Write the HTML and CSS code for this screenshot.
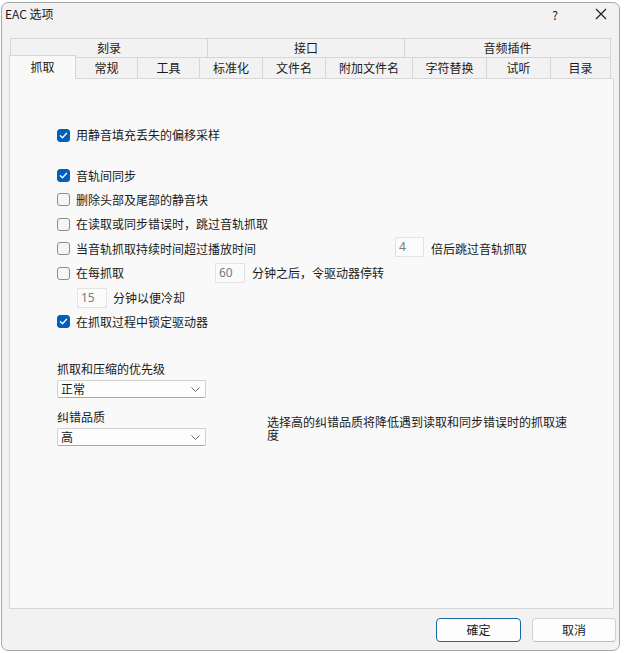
FILE: index.html
```html
<!DOCTYPE html>
<html lang="zh-CN">
<head>
<meta charset="utf-8">
<title>EAC 选项</title>
<link rel="stylesheet" href="styles.css">
</head>
<body>
<div class="window">
  <div class="titlebar">
    <span class="title">EAC 选项</span>
    <span class="help">?</span>
    <span class="close"><svg width="12" height="12" viewBox="0 0 12 12"><path d="M1 1 L11 11 M11 1 L1 11" stroke="#1a1a1a" stroke-width="1.1" fill="none"/></svg></span>
  </div>

  <div class="tabs">
    <div class="tabrow top">
      <div class="tab w197">刻录</div>
      <div class="tab w197">接口</div>
      <div class="tab w207 last">音频插件</div>
    </div>
    <div class="tabrow bottom">
      <div class="tab sel w67">抓取</div>
      <div class="tab w61">常规</div>
      <div class="tab w62">工具</div>
      <div class="tab w63">标准化</div>
      <div class="tab w63">文件名</div>
      <div class="tab w87">附加文件名</div>
      <div class="tab w74">字符替换</div>
      <div class="tab w64">试听</div>
      <div class="tab w61 last">目录</div>
    </div>
    <div class="panel">
      <div class="row first">
        <span class="cb on"><svg width="13" height="13" viewBox="0 0 13 13"><path d="M3.4 6.7 L5.5 8.8 L9.6 4.3" stroke="#fff" stroke-width="1.3" fill="none" stroke-linecap="round" stroke-linejoin="round"/></svg></span>
        <span class="lbl">用静音填充丢失的偏移采样</span>
      </div>
      <div class="group">
        <div class="row">
          <span class="cb on"><svg width="13" height="13" viewBox="0 0 13 13"><path d="M3.4 6.7 L5.5 8.8 L9.6 4.3" stroke="#fff" stroke-width="1.3" fill="none" stroke-linecap="round" stroke-linejoin="round"/></svg></span>
          <span class="lbl">音轨间同步</span>
        </div>
        <div class="row">
          <span class="cb"></span>
          <span class="lbl">删除头部及尾部的静音块</span>
        </div>
        <div class="row">
          <span class="cb"></span>
          <span class="lbl">在读取或同步错误时，跳过音轨抓取</span>
        </div>
        <div class="row">
          <span class="lead lead-long"><span class="cb"></span><span class="lbl">当音轨抓取持续时间超过播放时间</span></span>
          <span class="num n4">4</span>
          <span class="after">倍后跳过音轨抓取</span>
        </div>
        <div class="row">
          <span class="lead lead-short"><span class="cb"></span><span class="lbl">在每抓取</span></span>
          <span class="num n30">60</span>
          <span class="after">分钟之后，令驱动器停转</span>
        </div>
        <div class="row indent">
          <span class="num n30">15</span>
          <span class="after">分钟以便冷却</span>
        </div>
        <div class="row">
          <span class="cb on"><svg width="13" height="13" viewBox="0 0 13 13"><path d="M3.4 6.7 L5.5 8.8 L9.6 4.3" stroke="#fff" stroke-width="1.3" fill="none" stroke-linecap="round" stroke-linejoin="round"/></svg></span>
          <span class="lbl">在抓取过程中锁定驱动器</span>
        </div>
      </div>

      <div class="field prio">
        <div class="flabel">抓取和压缩的优先级</div>
        <div class="select"><span>正常</span><svg width="9" height="5" viewBox="0 0 9 5"><path d="M0.5 0.5 L4.5 4.5 L8.5 0.5" stroke="#666" stroke-width="1" fill="none"/></svg></div>
      </div>
      <div class="qual">
        <div class="field">
          <div class="flabel">纠错品质</div>
          <div class="select"><span>高</span><svg width="9" height="5" viewBox="0 0 9 5"><path d="M0.5 0.5 L4.5 4.5 L8.5 0.5" stroke="#666" stroke-width="1" fill="none"/></svg></div>
        </div>
        <div class="desc">选择高的纠错品质将降低遇到读取和同步错误时的抓取速度</div>
      </div>
    </div>
  </div>

  <div class="buttons">
    <div class="btn default">確定</div>
    <div class="btn">取消</div>
  </div>
</div>
</body>
</html>
```
FILE: styles.css
```css
* { box-sizing: border-box; }
html, body { margin: 0; padding: 0; }
body {
  width: 624px;
  height: 653px;
  background: #ffffff;
  font-family: "Noto Sans CJK SC", "Noto Sans", sans-serif;
  font-size: 12px;
  color: #1a1a1a;
  overflow: hidden;
}
.window {
  margin: 2px 0 0 1px;
  width: 619px;
  height: 649px;
  background: #f2f2f2;
  border: 1px solid #a7a7a7;
  border-radius: 7px;
  overflow: hidden;
}
.titlebar {
  height: 22px;
  display: flex;
  align-items: center;
  padding-left: 3px;
}
.title { flex: 1; line-height: 16px; }
.help { width: 20px; text-align: center; margin-right: 26px; font-size: 12px; }
.close { width: 20px; display: flex; justify-content: center; margin-right: 8px; }

.tabs { margin: 13px 0 0 7px; }
.tabrow { display: flex; }
.tabrow.top { margin-left: 1px; height: 19px; }
.tabrow.bottom { height: 21px; }
.tab {
  display: flex;
  align-items: center;
  justify-content: center;
  border-top: 1px solid #d6d6d6;
  border-left: 1px solid #d6d6d6;
  background: #f2f2f2;
  line-height: 14px;
}
.tab.last { border-right: 1px solid #d6d6d6; }
.tab.sel {
  position: relative;
  z-index: 1;
  height: 24px;
  margin-top: -2px;
  margin-bottom: -1px;
  background: #f9f9f9;
  border-right: 1px solid #d6d6d6;
  padding-bottom: 2px;
}
.tab.sel + .tab { border-left: none; }
.w197 { width: 197px; }
.w207 { width: 207px; }
.w67 { width: 67px; }
.w61 { width: 61px; }
.w62 { width: 62px; }
.w63 { width: 63px; }
.w87 { width: 87px; }
.w74 { width: 74px; }
.w64 { width: 64px; }

.panel {
  width: 605px;
  height: 531px;
  background: #f9f9f9;
  border: 1px solid #d6d6d6;
  padding: 44px 0 0 47px;
}
.row {
  display: flex;
  align-items: center;
  height: 24.4px;
}
.group { margin-top: 16px; }
.cb {
  width: 13px;
  height: 13px;
  border-radius: 3px;
  border: 1px solid #8b8b8b;
  background: #f6f6f6;
  flex: none;
  display: flex;
}
.cb.on { background: #005fb8; border-color: #005fb8; }
.cb svg { margin: -1px; }
.lbl { margin-left: 6px; line-height: 14px; }
.lead { display: flex; align-items: center; flex: none; }
.lead-long { width: 338px; }
.lead-short { width: 158px; }
.num {
  height: 20px;
  border: 1px solid #e3e3e3;
  background: #fbfbfb;
  color: #7a7a7a;
  padding-left: 3px;
  line-height: 18px;
  font-family: "Noto Sans", "Noto Sans CJK SC", sans-serif;
  font-size: 12px;
  flex: none;
}
.n4 { width: 29px; margin-top: -3px; }
.n30 { width: 30px; }
.after { margin-left: 7px; line-height: 14px; }
.indent { padding-left: 20px; }
.indent .after { margin-left: 6px; }

.field { width: 149px; }
.prio { margin-top: 28px; }
.flabel { line-height: 14px; height: 18px; }
.select {
  height: 18px;
  background: #fdfdfd;
  border: 1px solid #d0d0d0;
  border-bottom-color: #a9a9a9;
  border-radius: 2px;
  display: flex;
  align-items: center;
  justify-content: space-between;
  padding: 0 5px 0 3px;
  line-height: 14px;
}
.qual { display: flex; margin-top: 12px; }
.desc {
  margin: 5px 0 0 61px;
  width: 306px;
  line-height: 13px;
}

.buttons {
  display: flex;
  justify-content: flex-end;
  gap: 11px;
  margin: 9px 3px 0 0;
}
.btn {
  width: 84px;
  height: 24px;
  background: #fdfdfd;
  border: 1px solid #d0d0d0;
  border-bottom-color: #bdbdbd;
  border-radius: 4px;
  display: flex;
  align-items: center;
  justify-content: center;
  line-height: 14px;
}
.btn.default { width: 85px; border: 1px solid #1d6aa3; }
```
